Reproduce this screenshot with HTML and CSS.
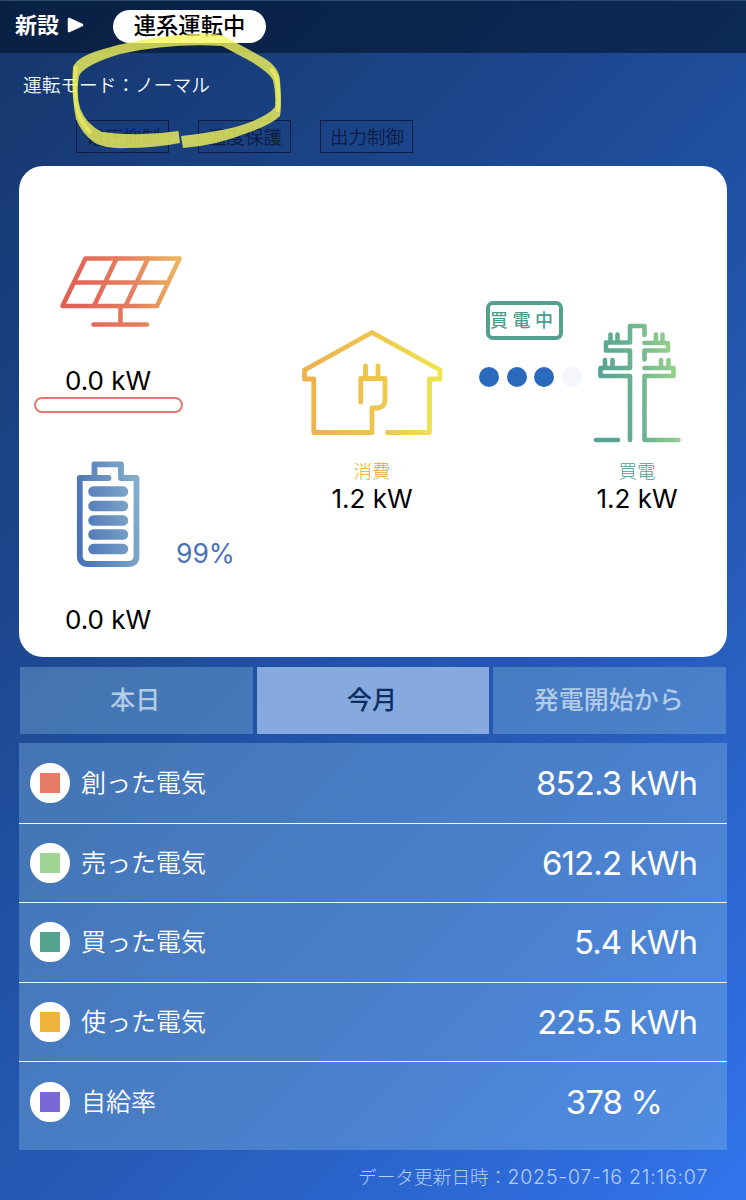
FILE: index.html
```html
<!DOCTYPE html>
<html lang="ja">
<head>
<meta charset="utf-8">
<title>運転状況</title>
<link rel="stylesheet" href="styles.css">
</head>
<body>
<div class="app">
  <header class="topbar">
    <span class="topbar-title">新設</span>
    <svg class="topbar-arrow" width="17" height="16" viewBox="0 0 17 16"><path d="M2 2v12L15 8z" fill="#fff" stroke="#fff" stroke-width="2.500" stroke-linejoin="round"/></svg>
    <span class="status-pill">連系運転中</span>
  </header>
  <div class="mode">運転モード：ノーマル</div>
  <div class="flags">
    <span class="flag">電圧抑制</span>
    <span class="flag">温度保護</span>
    <span class="flag">出力制御</span>
  </div>

  <main class="card">
    <section class="sources">
      <svg class="solar" width="124" height="74" viewBox="0 0 124 74">
        <defs><linearGradient id="gs" gradientUnits="userSpaceOnUse" x1="10" y1="40" x2="120" y2="20"><stop offset="0" stop-color="#e25f55"/><stop offset=".55" stop-color="#e57e5f"/><stop offset="1" stop-color="#ecb55f"/></linearGradient></defs>
        <g fill="none" stroke="url(#gs)" stroke-width="4.600" stroke-linecap="round" stroke-linejoin="round">
          <path d="M26.500 4.500H120.500L98 52H3.500Z"/><path d="M15 28.500H109"/><path d="M57.500 4.500L35 52M89 4.500L66.500 52M61.500 53V69.500M34.500 70.500H88"/>
        </g>
      </svg>
      <div class="kw">0.0 kW</div>
      <div class="meter"></div>
      <div class="battery-row">
        <svg width="65" height="108" viewBox="0 0 65 108">
          <defs><linearGradient id="gb" gradientUnits="userSpaceOnUse" x1="0" y1="60" x2="64" y2="50"><stop offset="0" stop-color="#4a72b6"/><stop offset="1" stop-color="#83adca"/></linearGradient></defs>
          <g fill="none" stroke="url(#gb)" stroke-linecap="round" stroke-linejoin="round">
            <path stroke-width="5.800" d="M32.500 18H3.800V96Q4 104 12 104H52Q60.500 104 60.500 96V18H45V4.300H18.500V16"/>
            <path stroke-width="10.500" d="M17.500 31.500H47M17.500 46H47M17.500 60.500H47M17.500 74.500H47M17.500 89H47"/>
          </g>
        </svg>
        <span class="percent">99%</span>
      </div>
      <div class="kw kw-battery">0.0 kW</div>
    </section>

    <section class="home">
      <svg width="142" height="108" viewBox="0 0 142 108">
        <defs><linearGradient id="gh" gradientUnits="userSpaceOnUse" x1="5" y1="50" x2="138" y2="50"><stop offset="0" stop-color="#edb14d"/><stop offset=".55" stop-color="#edc74b"/><stop offset="1" stop-color="#eee54e"/></linearGradient></defs>
        <g fill="none" stroke="url(#gh)" stroke-width="4.800" stroke-linecap="round" stroke-linejoin="round">
          <path d="M59.800 73V49.500H84V70.500Q84 78.500 76.500 79H71V103.500H12.800V50H3.500V41L71 3.500L139 41V50H128.500V103.500H86.500"/>
          <path d="M64.500 48V37M77 48V37"/>
        </g>
      </svg>
      <div class="label label-home">消費</div>
      <div class="kw">1.2 kW</div>
    </section>

    <section class="flow">
      <div class="buying">買電中</div>
      <div class="dots"><i class="dot"></i><i class="dot"></i><i class="dot"></i><i class="dot dot-off"></i></div>
    </section>

    <section class="grid-power">
      <svg width="88" height="122" viewBox="0 0 88 122">
        <defs><linearGradient id="gg" gradientUnits="userSpaceOnUse" x1="6" y1="65" x2="82" y2="55"><stop offset="0" stop-color="#56a295"/><stop offset=".45" stop-color="#66b18f"/><stop offset="1" stop-color="#96cf8c"/></linearGradient></defs>
        <g fill="none" stroke="url(#gg)" stroke-width="4.600" stroke-linecap="round" stroke-linejoin="round">
          <path d="M51.500 13V4H37V20.500H13V28.500H37V46H7.500V54H37V118"/>
          <path d="M51.500 21H75V28.500H51.500V37.500M51.500 46H80.500V54H51.500V118H85.500M3 118H25"/>
          <path d="M17.500 19.500V12.500M24.500 19.500V12.500M12 45V38M19.500 45V38M63 20.500V12.500M69.500 20.500V12.500M68 45V38M75.500 45V38"/>
        </g>
      </svg>
      <div class="label label-grid">買電</div>
      <div class="kw">1.2 kW</div>
    </section>
  </main>

  <nav class="tabs">
    <button class="tab">本日</button>
    <button class="tab tab-active">今月</button>
    <button class="tab">発電開始から</button>
  </nav>

  <ul class="stats">
    <li class="stat"><i class="chip chip-made"></i><span class="name">創った電気</span><span class="value">852.3 kWh</span></li>
    <li class="stat"><i class="chip chip-sold"></i><span class="name">売った電気</span><span class="value">612.2 kWh</span></li>
    <li class="stat"><i class="chip chip-bought"></i><span class="name">買った電気</span><span class="value">5.4 kWh</span></li>
    <li class="stat"><i class="chip chip-used"></i><span class="name">使った電気</span><span class="value">225.5 kWh</span></li>
    <li class="stat"><i class="chip chip-rate"></i><span class="name">自給率</span><span class="value value-rate">378 %</span></li>
  </ul>
  <footer class="updated">データ更新日時：<span class="stamp">2025-07-16 21:16:07</span></footer>

  <svg class="marker" width="300" height="160" viewBox="0 0 300 160">
    <path fill="#f6f659" fill-opacity=".79" fill-rule="evenodd" d="M178.500 131L180 143Q155 148 126 148Q106 149 95 143Q82 134 76 119Q71 94 73 67Q77 57 100 50Q140 38 180 35Q205 32 222 35L264 58Q279 67 280 80Q282 106 280 116Q272 124 250 132Q215 146 183 148L181 136Q225 131 245 124Q268 116 275 107Q276 92 273 80Q269 72 250 61L222 46Q170 43 120 54Q84 65 79 76Q76 94 80 108Q86 124 102 132Q140 137 178.500 131Z"/>
    <path fill="none" stroke="#f3f560" stroke-width="4" stroke-opacity=".6" stroke-linecap="round" stroke-linejoin="round" d="M76 68Q73 92 78 112Q82 124 90 132M272 70Q278 78 278 88Q279 98 278 110"/>
  </svg>
</div>
</body>
</html>
```
FILE: styles.css
```css
* { box-sizing: border-box; }
body { margin: 0; font-family: Inter, "Noto Sans CJK JP", sans-serif; }
.app {
  position: relative;
  width: 746px;
  height: 1200px;
  overflow: hidden;
  display: flex;
  flex-direction: column;
  background: linear-gradient(135deg, #15366b 0%, #1a4080 20%, #1f4f9f 45%, #275cba 68%, #3274ec 100%);
}
.topbar {
  height: 53px;
  padding-left: 15px;
  display: flex;
  align-items: center;
  background: rgba(1, 18, 40, .6);
  border-top: 1px solid #2b4c74;
  color: #fff;
}
.topbar-title { font-size: 22px; line-height: 30px; font-weight: 700; margin-top: -4px; }
.topbar-arrow { margin: -5px 0 0 8px; }
.status-pill {
  width: 153px;
  height: 33px;
  margin: -2px 0 0 29px;
  border-radius: 17px;
  background: #fff;
  color: #000;
  font-size: 22.300px;
  font-weight: 500;
  line-height: 31px;
  text-align: center;
}
.mode { margin: 20px 0 0 23px; height: 26px; line-height: 26px; font-size: 18.700px; font-weight: 350; color: #f2f6ff; white-space: nowrap; }
.flags { display: flex; gap: 29px; margin: 21px 0 0 76.400px; }
.flag { width: 93px; height: 33px; border: 1px solid #0b1c45; color: #0b1c45; font-size: 18.500px; font-weight: 350; line-height: 33px; text-align: center; }

.card {
  margin: 13px 19px 0;
  height: 491px;
  border-radius: 24px;
  background: #fff;
  display: grid;
  grid-template-columns: 251px 204px 110px 106px;
}
.kw { font-size: 26px; line-height: 32px; font-weight: 400; color: #000; text-align: center; white-space: nowrap; }
.sources { padding: 88px 0 0 15px; display: flex; flex-direction: column; }
.sources .kw { width: 148px; }
.solar { margin-left: 25px; }
.sources .solar + .kw { margin-top: 37px; }
.meter { width: 149px; height: 16px; border: 2px solid #e07a70; border-radius: 8px; }
.battery-row { display: flex; margin: 47px 0 0 42px; height: 108px; align-items: flex-end; }
.percent { margin: 0 0 -1px 35px; font-size: 26.500px; line-height: 32px; color: #4a72b6; font-weight: 400; }
.kw-battery { margin-top: 36px; }

.home { padding-top: 163px; display: flex; flex-direction: column; align-items: center; }
.label { height: 28px; font-size: 18.500px; line-height: 28px; font-weight: 300; }
.label-home { margin-top: 20px; color: #eba832; }
.label-grid { margin-top: 13px; color: #4a9d8b; }
.home .kw, .grid-power .kw { margin-top: -2px; }

.flow { padding: 135px 0 0 13px; }
.buying { width: 77px; height: 39px; margin-left: -1px; border: 4px solid #54a08f; border-radius: 7px; color: #4a9d8b; font-size: 18px; font-weight: 500; line-height: 31px; letter-spacing: 4.500px; white-space: nowrap; }
.dots { display: flex; gap: 7.500px; margin: 27px 0 0 -8px; }
.dot { flex: none; width: 20px; height: 20px; border-radius: 50%; background: #2a69bb; }
.dot-off { background: #f4f6fc; }
.grid-power { padding-top: 156px; display: flex; flex-direction: column; align-items: center; }

.tabs { display: grid; grid-template-columns: repeat(3, 1fr); gap: 4px; margin: 10px 20px 0; height: 67px; }
.tab { border: 0; padding: 0 2px 2px 0; background: rgba(132, 184, 220, .38); color: #b1cbe9; font: 500 25px/36px Inter, "Noto Sans CJK JP", sans-serif; }
.tab-active { background: #86aade; color: #0d2d61; }
.stats { list-style: none; margin: 9px 19px 0; padding: 1px 0 0; height: 407px; background: rgba(132, 184, 224, .38); }
.stat { height: 79.600px; padding: 0 30px 0 11px; display: flex; align-items: center; border-bottom: 1px solid #eef5ff; color: #fff; }
.stat:last-child { border-bottom: 0; }
.chip { width: 40px; height: 40px; border-radius: 50%; border: 10px solid #fff; background: #fff; display: block; }
.chip::before { content: ""; display: block; width: 20px; height: 20px; background: var(--c); }
.chip-made { --c: #e57b62; }
.chip-sold { --c: #9ed494; }
.chip-bought { --c: #55a28f; }
.chip-used { --c: #f0b33c; }
.chip-rate { --c: #7b68d7; }
.name { margin-left: 11px; font-size: 25px; font-weight: 350; line-height: 36px; }
.value { margin-left: auto; font-size: 33px; line-height: 38px; font-weight: 400; letter-spacing: -.9px; }
.value-rate { margin-right: 35px; }
.updated { margin: 13px 38px 0 0; text-align: right; font-size: 18.700px; line-height: 28px; font-weight: 300; color: #b7cdf4; white-space: nowrap; }
.stamp { font-size: 19.500px; letter-spacing: .8px; }
.marker { position: absolute; left: 0; top: 0; }
```
